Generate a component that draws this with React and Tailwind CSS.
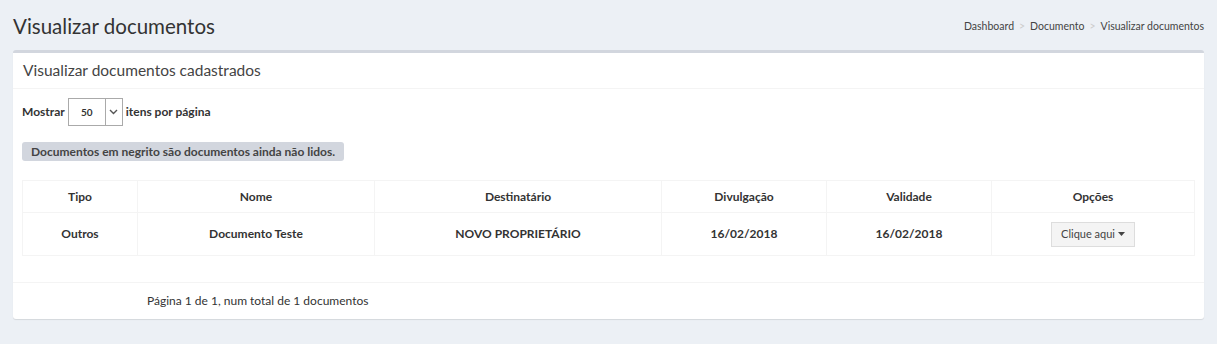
import React from "react";

export default function App() {
  const font = { fontFamily: "Lato, 'Noto Sans', sans-serif" };
  const cols = [
    { w: "w-[115px]", h: "Tipo", v: "Outros" },
    { w: "w-[237px]", h: "Nome", v: "Documento Teste" },
    { w: "w-[287px]", h: "Destinatário", v: "NOVO PROPRIETÁRIO" },
    { w: "w-[165px]", h: "Divulgação", v: "16/02/2018" },
    { w: "w-[165px]", h: "Validade", v: "16/02/2018" },
  ];
  return (
    <div className="w-[1217px] h-[344px] bg-[#ecf0f5] text-[#333] overflow-hidden" style={font}>
      <div className="flex items-center justify-between pl-[13px] pr-[13px] h-[50px] pt-[2px]">
        <h1 className="text-[20.5px] text-[#333] leading-none">Visualizar documentos</h1>
        <div className="flex items-center text-[10.5px] text-[#444] gap-[5px] pt-[2px]">
          <span>Dashboard</span>
          <span className="text-[#ccc]">&gt;</span>
          <span>Documento</span>
          <span className="text-[#ccc]">&gt;</span>
          <span>Visualizar documentos</span>
        </div>
      </div>
      <div className="mx-[13px] bg-white border-t-[3px] border-[#d2d6de] rounded-[3px] shadow-[0_1px_1px_rgba(0,0,0,0.1)]">
        <div className="h-[36px] flex items-center px-[10px] border-b border-[#f4f4f4]">
          <h3 className="text-[15.5px] text-[#444]">Visualizar documentos cadastrados</h3>
        </div>
        <div className="px-[9px] pt-[9px]">
          <div className="flex items-center gap-[3px] text-[12px] font-bold">
            <span>Mostrar</span>
            <div className="flex h-[28px] w-[55px] border border-[#aaa]">
              <div className="flex-1 flex items-center justify-center text-[10px] font-bold">50</div>
              <div className="w-[17px] border-l border-[#aaa] flex items-center justify-center">
                <svg width="9" height="6" viewBox="0 0 9 6"><path d="M1 1l3.5 3.5L8 1" stroke="#555" strokeWidth="1.4" fill="none" /></svg>
              </div>
            </div>
            <span>itens por página</span>
          </div>
          <div className="mt-[16px] inline-block bg-[#d2d6de] rounded-[3px] px-[9px] h-[19px] leading-[19px] text-[12px] font-bold text-[#444]">
            Documentos em negrito são documentos ainda não lidos.
          </div>
          <table className="mt-[18px] w-[1173px] border-collapse border border-[#f4f4f4] text-[12px]">
            <thead>
              <tr className="h-[32px]">
                {cols.map((c) => (
                  <th key={c.h} className={`${c.w} border border-[#f4f4f4] font-bold text-center`}>{c.h}</th>
                ))}
                <th className="border border-[#f4f4f4] font-bold text-center">Opções</th>
              </tr>
            </thead>
            <tbody>
              <tr className="h-[43px]">
                {cols.map((c) => (
                  <td key={c.h} className="border border-[#f4f4f4] font-bold text-center">{c.v}</td>
                ))}
                <td className="border border-[#f4f4f4] text-center">
                  <span className="inline-flex items-center gap-[3px] h-[25px] px-[9px] bg-[#f4f4f4] border border-[#ddd] text-[11px] text-[#444]">
                    Clique aqui
                    <svg width="7" height="4" viewBox="0 0 7 4"><path d="M0 0h7L3.5 4z" fill="#444" /></svg>
                  </span>
                </td>
              </tr>
            </tbody>
          </table>
        </div>
        <div className="mt-[26px] border-t border-[#f4f4f4] h-[37px] flex items-center pl-[134px] text-[12px] text-[#333]">
          Página 1 de 1, num total de 1 documentos
        </div>
      </div>
    </div>
  );
}
